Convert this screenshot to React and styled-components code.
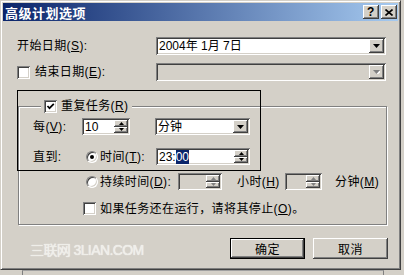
import React from "react";
import styled, { createGlobalStyle } from "styled-components";

const font = `"Liberation Sans", "Noto Sans CJK SC", sans-serif`;

const raised = `box-shadow: inset -1px -1px #404040, inset 1px 1px #fff, inset -2px -2px #808080, inset 2px 2px #d4d0c8;`;
const sunken = `box-shadow: inset 1px 1px #808080, inset -1px -1px #fff, inset 2px 2px #404040, inset -2px -2px #d4d0c8;`;

const GlobalStyle = createGlobalStyle`
  html, body { margin: 0; padding: 0; background: #d4d0c8; overflow: hidden; }
  body { font-family: ${font}; font-size: 12px; color: #000; }
  * { box-sizing: border-box; }
`;

const Page = styled.div`
  width: 404px;
  height: 275px;
  display: flex;
  flex-direction: column;
`;

const Window = styled.div`
  position: relative;
  width: 401px;
  height: 270px;
  border: 1px solid;
  border-color: #d4d0c8 #404040 #404040 #d4d0c8;
  box-shadow: inset 1px 1px #fff, inset -1px -1px #808080;
  padding: 2px;
  display: flex;
  flex-direction: column;
`;

const TitleBar = styled.div`
  height: 18px;
  display: flex;
  align-items: center;
  padding: 0 1px 0 2px;
  background: linear-gradient(to right, #0a246a, #a6caf0);
  color: #fff;
  font-weight: bold;
  font-size: 13px;
  letter-spacing: 0.5px;
`;

const TitleButtons = styled.div`
  margin-left: auto;
  display: flex;
  gap: 2px;
`;

const TitleButton = styled.span`
  width: 16px;
  height: 14px;
  display: flex;
  align-items: center;
  justify-content: center;
  background: #d4d0c8;
  color: #000;
  font-family: "Liberation Sans", sans-serif;
  font-size: 12px;
  font-weight: bold;
  line-height: 1;
  ${raised}
`;

const Body = styled.div`
  flex: 1;
  display: flex;
  flex-direction: column;
  padding: 16px 10px 0 14px;
  letter-spacing: 0.4px;
`;

const Row = styled.div`
  display: flex;
  align-items: center;
  height: ${p => p.h || 18}px;
  margin-top: ${p => p.mt || 0}px;
  line-height: 14px;
  white-space: nowrap;
`;

const Label = styled.span`
  width: ${p => (p.w ? `${p.w}px` : "auto")};
  margin-left: ${p => p.ml || 0}px;
  flex-shrink: 0;
`;

const Combo = styled.div`
  display: flex;
  align-items: stretch;
  width: ${p => p.w}px;
  height: ${p => p.h || 18}px;
  margin-left: ${p => p.ml || 0}px;
  padding: 2px;
  background: ${p => (p.disabled ? "#d4d0c8" : "#fff")};
  ${sunken}
`;

const FieldText = styled.span`
  flex: 1;
  display: flex;
  align-items: center;
  padding-left: 1px;
  white-space: nowrap;
  letter-spacing: 0;
`;

const DropButton = styled.span`
  width: 15px;
  display: flex;
  align-items: center;
  justify-content: center;
  background: #d4d0c8;
  ${raised}
`;

const Spinner = styled.span`
  width: 14px;
  display: flex;
  flex-direction: column;
`;

const SpinButton = styled.span`
  flex: 1;
  display: flex;
  align-items: center;
  justify-content: center;
  background: #d4d0c8;
  ${raised}
`;

const Selected = styled.span`
  background: #0a246a;
  color: #fff;
`;

const Box = styled.span`
  width: 13px;
  height: 13px;
  flex-shrink: 0;
  margin-left: ${p => p.ml || 0}px;
  display: flex;
  align-items: center;
  justify-content: center;
  background: #fff;
  ${sunken}
`;

const Radio = styled.span`
  width: 12px;
  height: 12px;
  flex-shrink: 0;
  margin-left: ${p => p.ml || 0}px;
  margin-right: 2px;
  border-radius: 50%;
  display: flex;
  align-items: center;
  justify-content: center;
  background: #fff;
  border: 1px solid;
  border-color: #808080 #fff #fff #808080;
  box-shadow: inset 1px 1px #404040, inset -1px -1px #d4d0c8;
`;

const Dot = styled.span`
  width: 4px;
  height: 4px;
  border-radius: 50%;
  background: #000;
`;

const Group = styled.fieldset`
  margin: 19px 0 0 1px;
  width: 369px;
  min-width: 0;
  padding: 5px 0 7px 14px;
  border: 1px solid #808080;
  box-shadow: inset 1px 1px #fff, 1px 1px #fff;
`;

const Legend = styled.legend`
  display: flex;
  align-items: center;
  gap: 4px;
  height: 13px;
  margin-left: 8px;
  padding: 0 3px;
  background: #d4d0c8;
  line-height: 13px;
  white-space: nowrap;
`;

const ButtonRow = styled.div`
  display: flex;
  align-items: center;
  margin-top: 13px;
  height: 21px;
`;

const Watermark = styled.span`
  margin-left: 13px;
  color: #efeee9;
  font-size: 14px;
  letter-spacing: -0.6px;
  text-shadow: 0 0 1px #fff;
`;

const Button = styled.span`
  width: 75px;
  height: 21px;
  margin-left: ${p => (p.first ? "auto" : "8px")};
  display: flex;
  align-items: center;
  justify-content: center;
  background: #d4d0c8;
  letter-spacing: 0.5px;
  border: ${p => (p.primary ? "1px solid #000" : "none")};
  ${raised}
`;

const Highlight = styled.div`
  position: absolute;
  left: 16px;
  top: 89px;
  width: 244px;
  height: 81px;
  border: 1px solid #000;
  pointer-events: none;
`;

const Behind = styled.div`
  flex: 1;
  display: flex;
  background: #d4d0c8;
`;

const BehindPanel = styled.div`
  margin-left: 22px;
  width: 362px;
  border-left: 1px solid #808080;
  border-right: 1px solid #808080;
  border-top: 1px solid #a0a0a0;
`;

const Arrow = ({ disabled }) => (
  <svg width="7" height="4" viewBox="0 0 7 4">
    {disabled && <polygon points="1,1 8,1 4.5,5" fill="#fff" />}
    <polygon points="0,0 7,0 3.5,4" fill={disabled ? "#808080" : "#000"} />
  </svg>
);

const SpinArrow = ({ down, disabled }) => (
  <svg width="5" height="3" viewBox="0 0 5 3">
    <polygon points={down ? "0,0 5,0 2.5,3" : "0,3 5,3 2.5,0"} fill={disabled ? "#808080" : "#000"} />
  </svg>
);

const Check = () => (
  <svg width="9" height="9" viewBox="0 0 9 9">
    <polyline points="1.5,4 3.5,6.2 7.8,1.8" fill="none" stroke="#000" strokeWidth="1.7" />
  </svg>
);

const SpinEdit = ({ w, ml, disabled, children }) => (
  <Combo w={w} h={17} ml={ml} disabled={disabled}>
    <FieldText>{children}</FieldText>
    <Spinner>
      <SpinButton><SpinArrow disabled={disabled} /></SpinButton>
      <SpinButton><SpinArrow down disabled={disabled} /></SpinButton>
    </Spinner>
  </Combo>
);

const M = ({ k }) => (
  <>
    (<u>{k}</u>)
  </>
);

const App = () => (
  <Page>
    <GlobalStyle />
    <Window>
      <TitleBar>
        高级计划选项
        <TitleButtons>
          <TitleButton>?</TitleButton>
          <TitleButton>
            <svg width="8" height="7" viewBox="0 0 8 7">
              <path d="M0.5 0.5 L7.5 6.5 M7.5 0.5 L0.5 6.5" stroke="#000" strokeWidth="1.6" />
            </svg>
          </TitleButton>
        </TitleButtons>
      </TitleBar>

      <Body>
        <Row>
          <Label w={139}>开始日期<M k="S" />:</Label>
          <Combo w={230}>
            <FieldText>2004年 1月 7日</FieldText>
            <DropButton><Arrow /></DropButton>
          </Combo>
        </Row>

        <Row mt={8}>
          <Box />
          <Label w={121} ml={5}>结束日期<M k="E" />:</Label>
          <Combo w={230} disabled>
            <FieldText />
            <DropButton><Arrow disabled /></DropButton>
          </Combo>
        </Row>

        <Group>
          <Legend>
            <Box><Check /></Box>
            <Label>重复任务<M k="R" /></Label>
          </Legend>

          <Row h={17}>
            <Label w={49}>每<M k="V" />:</Label>
            <SpinEdit w={48}>10</SpinEdit>
            <Combo w={95} h={17} ml={25}>
              <FieldText>分钟</FieldText>
              <DropButton><Arrow /></DropButton>
            </Combo>
          </Row>

          <Row h={17} mt={13}>
            <Label w={53}>直到:</Label>
            <Radio><Dot /></Radio>
            <Label w={56}>时间<M k="T" />:</Label>
            <SpinEdit w={94}>
              23:<Selected>00</Selected>
            </SpinEdit>
          </Row>

          <Row h={17} mt={8}>
            <Radio ml={53} />
            <Label w={78}>持续时间<M k="D" />:</Label>
            <SpinEdit w={44} disabled />
            <Label w={48} ml={15}>小时<M k="H" /></Label>
            <SpinEdit w={37} disabled />
            <Label ml={13}>分钟<M k="M" /></Label>
          </Row>

          <Row h={17} mt={10}>
            <Box ml={50} />
            <Label ml={4}>如果任务还在运行，请将其停止<M k="O" />。</Label>
          </Row>
        </Group>

        <ButtonRow>
          <Watermark>三联网 3LIAN.COM</Watermark>
          <Button first primary>确定</Button>
          <Button>取消</Button>
        </ButtonRow>
      </Body>

      <Highlight />
    </Window>
    <Behind>
      <BehindPanel />
    </Behind>
  </Page>
);

export default App;
